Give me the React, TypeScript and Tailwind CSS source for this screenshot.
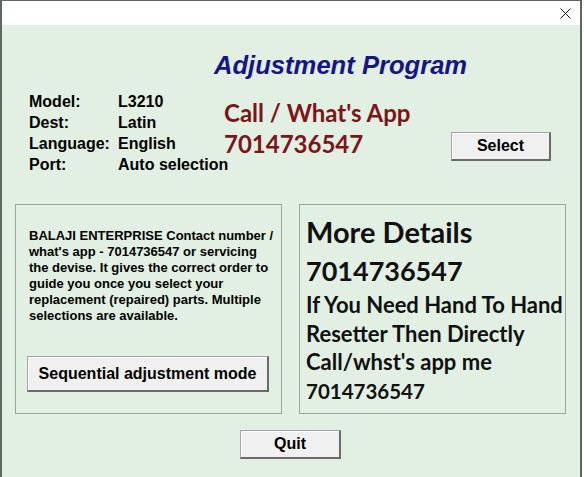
import React from "react";

const btn =
  "flex items-center justify-center bg-[#f0f0f0] border-t border-l border-[#a3a3a3] border-r-2 border-b-2 border-r-[#6b6b6b] border-b-[#6b6b6b] shadow-[inset_1px_1px_0_#ffffff] font-['Liberation_Sans',Arial,sans-serif] font-bold text-[16px] text-black";

export default function App() {
  return (
    <div className="w-[584px] h-[477px] bg-white overflow-hidden">
      <div className="w-[582px] h-[477px] border-l-2 border-r-2 border-t border-[#5c685c] flex flex-col">
        <div className="h-[24px] bg-white flex justify-end items-center pr-[9px]">
          <svg width="11" height="11" viewBox="0 0 11 11" className="mt-[1px]">
            <path d="M0.5 0.5 L10.5 10.5 M10.5 0.5 L0.5 10.5" stroke="#111" strokeWidth="1" fill="none" />
          </svg>
        </div>
        <div className="flex-1 bg-[#e2f0e3] flex flex-col">
          <div className="pt-[27px] pl-[212px] leading-[26px] text-[25.6px] font-bold italic text-[#151586] font-['Liberation_Sans',Arial,sans-serif] whitespace-nowrap">
            Adjustment Program
          </div>
          <div className="mt-[13px] flex">
            <div className="ml-[27px] w-[195px] grid grid-cols-[89px_auto] leading-[21px] text-[16px] font-bold text-black font-['Liberation_Sans',Arial,sans-serif] whitespace-nowrap">
              <span>Model:</span>
              <span>L3210</span>
              <span>Dest:</span>
              <span>Latin</span>
              <span>Language:</span>
              <span>English</span>
              <span>Port:</span>
              <span>Auto selection</span>
            </div>
            <div className="mt-[6px] w-[227px] flex flex-col text-[24px] leading-[31px] font-bold text-[#7b1517] font-['Lato',sans-serif] whitespace-nowrap">
              <span>Call / What's App</span>
              <span>7014736547</span>
            </div>
            <div className={btn + " mt-[41px] w-[100px] h-[29px]"}>Select</div>
          </div>
          <div className="mt-[29px] ml-[13px] flex gap-[17px]">
            <div className="w-[267px] h-[210px] border border-[#9aa59a] flex flex-col">
              <div className="pt-[23px] pl-[13px] text-[13px] leading-[16px] font-bold text-black font-['Liberation_Sans',Arial,sans-serif] whitespace-nowrap">
                BALAJI ENTERPRISE Contact number /<br />
                what's app - 7014736547 or servicing<br />
                the devise. It gives the correct order to<br />
                guide you once you select your<br />
                replacement (repaired) parts. Multiple<br />
                selections are available.
              </div>
              <div className={btn + " mt-[32px] ml-[11px] w-[242px] h-[36px]"}>Sequential adjustment mode</div>
            </div>
            <div className="w-[267px] h-[210px] border border-[#9aa59a] pt-[8px] pl-[6px] flex flex-col font-['Lato',sans-serif] font-bold text-[#111] whitespace-nowrap">
              <span className="text-[29px] leading-[38px]">More Details</span>
              <span className="text-[27px] leading-[40px]">7014736547</span>
              <span className="text-[22px] leading-[28.5px]">If You Need Hand To Hand</span>
              <span className="text-[22px] leading-[28.5px]">Resetter Then Directly</span>
              <span className="text-[22px] leading-[28.5px]">Call/whst's app me</span>
              <span className="text-[20.5px] leading-[28.5px]">7014736547</span>
            </div>
          </div>
          <div className={btn + " mt-[16px] ml-[238px] w-[101px] h-[29px]"}>Quit</div>
        </div>
      </div>
    </div>
  );
}
